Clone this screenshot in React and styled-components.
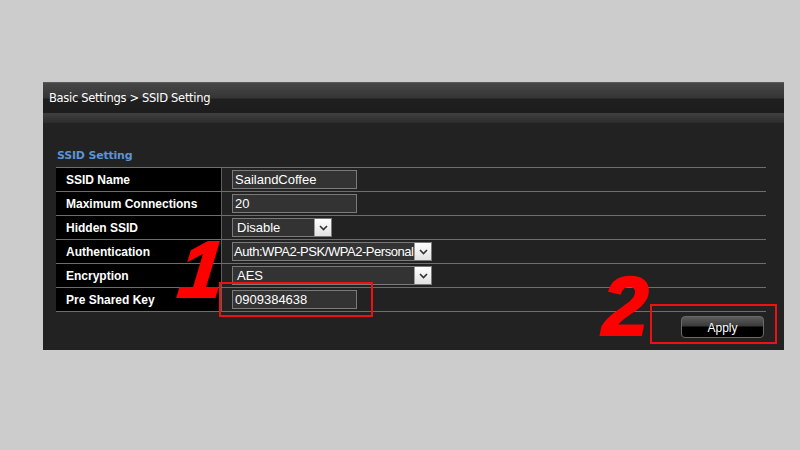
import React from "react";
import styled, { createGlobalStyle } from "styled-components";

const Global = createGlobalStyle`
  html, body { margin: 0; padding: 0; background: #cccccc; }
  body { font-family: "Liberation Sans", Arial, sans-serif; }
`;

const Page = styled.div`
  width: 800px;
  height: 450px;
  box-sizing: border-box;
  padding: 82px 16px 0 43px;
`;

const Panel = styled.div`
  position: relative;
  width: 741px;
  height: 268px;
  background: #222222;
  display: flex;
  flex-direction: column;
`;

const Header = styled.div`
  height: 31px;
  box-sizing: border-box;
  border-top: 1px solid #5a5a5a;
  background: linear-gradient(#474747 0px, #353535 15px, #1f1f1f 16px, #1d1d1d 100%);
  color: #ffffff;
  font-family: "DejaVu Sans", Tahoma, sans-serif;
  font-size: 11.5px;
  letter-spacing: -0.3px;
  display: flex;
  align-items: center;
  padding-left: 6px;
`;

const SubBar = styled.div`
  height: 10px;
  background: linear-gradient(#404040, #2c2c2c);
`;

const Content = styled.div`
  padding: 0 18px 0 13px;
  display: flex;
  flex-direction: column;
`;

const Title = styled.div`
  height: 44px;
  box-sizing: border-box;
  padding: 26px 0 0 1px;
  color: #5b93d6;
  font-family: "DejaVu Sans", Tahoma, sans-serif;
  font-weight: bold;
  font-size: 11px;
  letter-spacing: -0.2px;
`;

const Table = styled.div`
  border-top: 1px solid #6e6e6e;
`;

const Row = styled.div`
  display: grid;
  grid-template-columns: 166px 1fr;
  height: 24px;
  box-sizing: border-box;
  border-bottom: 1px solid #6e6e6e;
`;

const Label = styled.div`
  background: #000000;
  border-right: 1px solid #5e5e5e;
  color: #ffffff;
  font-weight: bold;
  font-size: 12px;
  display: flex;
  align-items: center;
  padding-left: 10px;
`;

const Cell = styled.div`
  display: flex;
  align-items: center;
  padding-left: 10px;
`;

const TextBox = styled.div`
  width: ${(p) => p.w}px;
  height: 19px;
  box-sizing: border-box;
  border: 1px solid #7a7a7a;
  background: #333333;
  color: #ffffff;
  font-size: 13px;
  display: flex;
  align-items: center;
  padding-left: 2px;
  white-space: nowrap;
`;

const Select = styled.div`
  width: ${(p) => p.w}px;
  height: 19px;
  box-sizing: border-box;
  border: 1px solid #7a7a7a;
  background: #333333;
  color: #ffffff;
  font-size: 13px;
  display: flex;
  align-items: center;
  white-space: nowrap;
`;

const SelectText = styled.span`
  flex: 1;
  min-width: 0;
  padding-left: ${(p) => p.pl}px;
  letter-spacing: ${(p) => p.ls || 0}px;
`;

const Arrow = styled.span`
  width: 16px;
  height: 17px;
  flex: none;
  background: linear-gradient(#ffffff, #e2e2e2);
  border-left: 1px solid #999;
  display: flex;
  align-items: center;
  justify-content: center;
`;

const Footer = styled.div`
  display: flex;
  justify-content: flex-end;
  padding: 4px 2px 0 0;
`;

const ApplyButton = styled.button`
  width: 83px;
  height: 22px;
  border: 1px solid #6a6a6a;
  border-radius: 4px;
  background: linear-gradient(#5c5c5c 0%, #3a3a3a 45%, #000000 50%, #000000 100%);
  color: #ffffff;
  font-family: "Liberation Sans", Arial, sans-serif;
  font-size: 12px;
  padding: 2px 0 0 0;
`;

const RedBox = styled.div`
  position: absolute;
  left: ${(p) => p.x}px;
  top: ${(p) => p.y}px;
  width: ${(p) => p.w}px;
  height: ${(p) => p.h}px;
  box-sizing: border-box;
  border: 2px solid #ee1111;
`;

const BigNum = styled.div`
  position: absolute;
  left: ${(p) => p.x}px;
  top: ${(p) => p.y}px;
  font-family: "Liberation Sans", Arial, sans-serif;
  font-weight: 900;
  font-style: italic;
  font-size: ${(p) => p.s}px;
  line-height: 1;
  color: #ff0000;
  -webkit-text-stroke: 2px #ff0000;
  transform: ${(p) => p.t || "none"};
`;

const Chevron = () => (
  <svg width="9" height="6" viewBox="0 0 9 6">
    <path d="M1 1 L4.5 4.5 L8 1" stroke="#333" strokeWidth="1.6" fill="none" />
  </svg>
);

const rows = [
  { label: "SSID Name", type: "text", value: "SailandCoffee", w: 125 },
  { label: "Maximum Connections", type: "text", value: "20", w: 125 },
  { label: "Hidden SSID", type: "select", value: "Disable", w: 100, pl: 4 },
  { label: "Authentication", type: "select", value: "Auth:WPA2-PSK/WPA2-Personal", w: 200, pl: 1, ls: -0.45 },
  { label: "Encryption", type: "select", value: "AES", w: 200, pl: 4 },
  { label: "Pre Shared Key", type: "text", value: "0909384638", w: 125 },
];

export default function App() {
  return (
    <>
      <Global />
      <Page>
        <Panel>
          <Header>Basic Settings &gt; SSID Setting</Header>
          <SubBar />
          <Content>
            <Title>SSID Setting</Title>
            <Table>
              {rows.map((r) => (
                <Row key={r.label}>
                  <Label>{r.label}</Label>
                  <Cell>
                    {r.type === "text" ? (
                      <TextBox w={r.w}>{r.value}</TextBox>
                    ) : (
                      <Select w={r.w}>
                        <SelectText pl={r.pl} ls={r.ls}>{r.value}</SelectText>
                        <Arrow>
                          <Chevron />
                        </Arrow>
                      </Select>
                    )}
                  </Cell>
                </Row>
              ))}
            </Table>
            <Footer>
              <ApplyButton>Apply</ApplyButton>
            </Footer>
          </Content>
          <RedBox x={176} y={200} w={154} h={35} />
          <RedBox x={607} y={222} w={127} h={40} />
          <BigNum x={136} y={148} s={80} t="skewX(-6deg)">1</BigNum>
          <BigNum x={559} y={182} s={84}>2</BigNum>
        </Panel>
      </Page>
    </>
  );
}
